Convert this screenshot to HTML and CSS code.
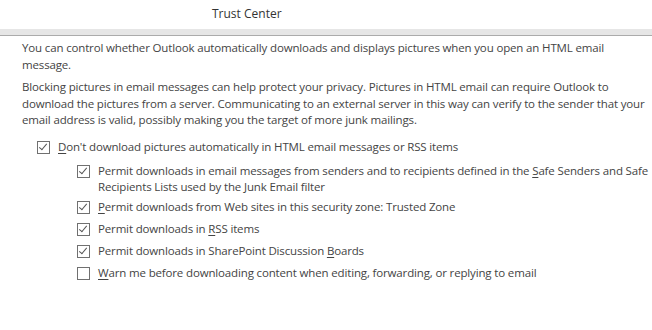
FILE: index.html
```html
<!DOCTYPE html>
<html lang="en">
<head>
  <meta charset="UTF-8" />
  <title>Trust Center</title>
  <link rel="stylesheet" href="styles.css">
</head>
<body>

<div class="titlebar">
  <span class="title">Trust Center</span>
</div>
<div class="band"></div>

<div class="content">
  <p>You can control whether Outlook automatically downloads and displays pictures when you open an HTML email message.</p>
  <p>Blocking pictures in email messages can help protect your privacy. Pictures in HTML email can require Outlook to download the pictures from a server. Communicating to an external server in this way can verify to the sender that your email address is valid, possibly making you the target of more junk mailings.</p>

  <label class="option top">
    <span class="box checked"></span>
    <span><u>D</u>on't download pictures automatically in HTML email messages or RSS items</span>
  </label>

  <div class="sub">
    <label class="option">
      <span class="box checked"></span>
      <span>Permit downloads in email messages from senders and to recipients defined in the <u>S</u>afe Senders and Safe Recipients Lists used by the Junk Email filter</span>
    </label>
    <label class="option">
      <span class="box checked"></span>
      <span><u>P</u>ermit downloads from Web sites in this security zone: Trusted Zone</span>
    </label>
    <label class="option">
      <span class="box checked"></span>
      <span>Permit downloads in <u>R</u>SS items</span>
    </label>
    <label class="option">
      <span class="box checked"></span>
      <span>Permit downloads in SharePoint Discussion <u>B</u>oards</span>
    </label>
    <label class="option">
      <span class="box"></span>
      <span><u>W</u>arn me before downloading content when editing, forwarding, or replying to email</span>
    </label>
  </div>
</div>

</body>
</html>
```

FILE: styles.css
```css
body {
  margin: 0;
  background: #fff;
  color: #444;
  font-family: "Open Sans", "Noto Sans", sans-serif;
  font-size: 11.5px;
  letter-spacing: -0.15px;
}

.titlebar {
  height: 29px;
  padding-left: 212px;
  box-sizing: border-box;
  padding-top: 5px;
}

.title {
  color: #333;
  font-size: 12px;
  letter-spacing: 0;
}

.band {
  height: 6px;
  background: #e6e6e6;
  border-bottom: 1px solid #ababab;
}

.content {
  padding: 4px 0 0 22px;
}

.content p {
  margin: 0 0 6px;
  line-height: 16.5px;
}

.option {
  display: flex;
  align-items: flex-start;
  gap: 8px;
  line-height: 16px;
  margin-bottom: 6px;
}

.option.top {
  margin-left: 15px;
  margin-top: 10px;
  margin-bottom: 8px;
}

.sub {
  margin-left: 55px;
}

.sub .option:first-child {
  margin-bottom: 4px;
}

.box {
  flex: none;
  width: 11px;
  height: 11px;
  border: 1px solid #707070;
  background: #fff;
  margin-top: 2px;
  position: relative;
}

.box.checked::after {
  content: "";
  position: absolute;
  left: 3px;
  top: 0;
  width: 3px;
  height: 7px;
  border: solid #555;
  border-width: 0 1.5px 1.5px 0;
  transform: rotate(40deg);
}

u {
  text-decoration: underline;
  text-underline-offset: 2px;
}
```
